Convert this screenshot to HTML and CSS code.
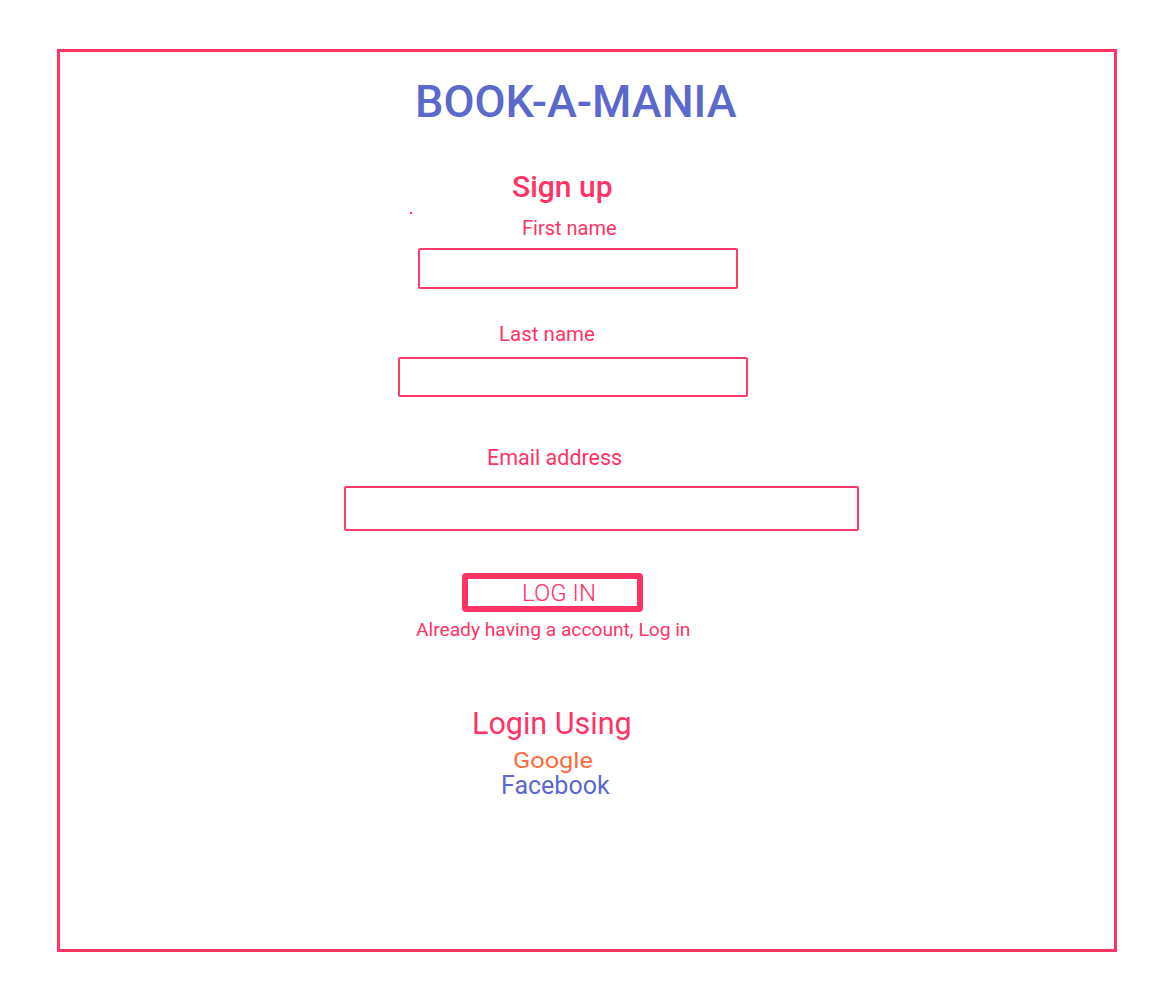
FILE: index.html
```html
<!DOCTYPE html>
<html lang="en">
<head>
<meta charset="utf-8">
<title>Book-a-mania – Sign up</title>
<link rel="stylesheet" href="styles.css">
</head>
<body>
<div class="frame">
  <h1 class="title">BOOK-A-MANIA</h1>
  <h2 class="signup">Sign up</h2>
  <span class="dot"></span>
  <label class="label first-label">First name</label>
  <div class="field field-first"></div>
  <label class="label last-label">Last name</label>
  <div class="field field-last"></div>
  <label class="label email-label">Email address</label>
  <div class="field field-email"></div>
  <button class="login-btn">LOG IN</button>
  <p class="already">Already having a account, Log in</p>
  <p class="using">Login Using</p>
  <a class="google">Google</a>
  <a class="facebook">Facebook</a>
</div>
</body>
</html>
```
FILE: styles.css
```css
* { box-sizing: border-box; }
html, body { margin: 0; padding: 0; background: #fff; }
body { font-family: Roboto, "Liberation Sans", sans-serif; }

.frame {
  margin: 49px 0 0 57px;
  width: 1060px;
  height: 903px;
  border: 3px solid #ff3366;
  display: flex;
  flex-direction: column;
  align-items: flex-start;
}

.frame > * { margin: 0; line-height: 1; white-space: nowrap; }

.title {
  font-size: 45px;
  font-weight: 500;
  color: #5b68cc;
  margin: 27px 0 0 355px;
}

.signup {
  font-size: 30px;
  line-height: 30px;
  font-weight: 500;
  color: #ff3366;
  margin: 48px 0 0 452px;
}

.dot {
  display: block;
  width: 2px;
  height: 2px;
  background: #ff3366;
  margin: 10px 0 0 350px;
}

.label {
  display: block;
  color: #ff3366;
}
.first-label { font-size: 20px; line-height: 20px; margin: 4px 0 0 462px; }
.last-label { font-size: 20.5px; line-height: 20px; margin: 35px 0 0 439px; }
.email-label { font-size: 21.5px; line-height: 21px; margin: 50px 0 0 427px; }

.field {
  border: 2px solid #ff3a6b;
  border-radius: 2px;
}
.field-first { width: 320px; height: 41px; margin: 10px 0 0 358px; }
.field-last { width: 350px; height: 40px; margin: 13px 0 0 338px; }
.field-email { width: 515px; height: 45px; margin: 18px 0 0 284px; }

.login-btn {
  width: 181px;
  height: 39px;
  margin: 42px 0 0 402px;
  border: 6px solid #ff3366;
  border-radius: 4px;
  background: #fff;
  color: #ff3366;
  font-family: Roboto, "Liberation Sans", sans-serif;
  font-size: 24px;
  font-weight: 300;
  padding: 0 0 0 13px;
  line-height: 1;
}

.already {
  font-size: 19.2px;
  line-height: 19px;
  color: #ff3366;
  margin: 8px 0 0 356px;
}

.using {
  font-size: 30.5px;
  line-height: 30px;
  color: #ff3366;
  margin: 70px 0 0 412px;
}

.google {
  display: block;
  font-size: 22px;
  line-height: 22px;
  color: #ff6b3d;
  margin: 11px 0 0 453px;
  transform: scaleX(1.15);
  transform-origin: left center;
}

.facebook {
  display: block;
  font-size: 25px;
  line-height: 25px;
  color: #5b68cc;
  margin: 1px 0 0 441px;
}
```
